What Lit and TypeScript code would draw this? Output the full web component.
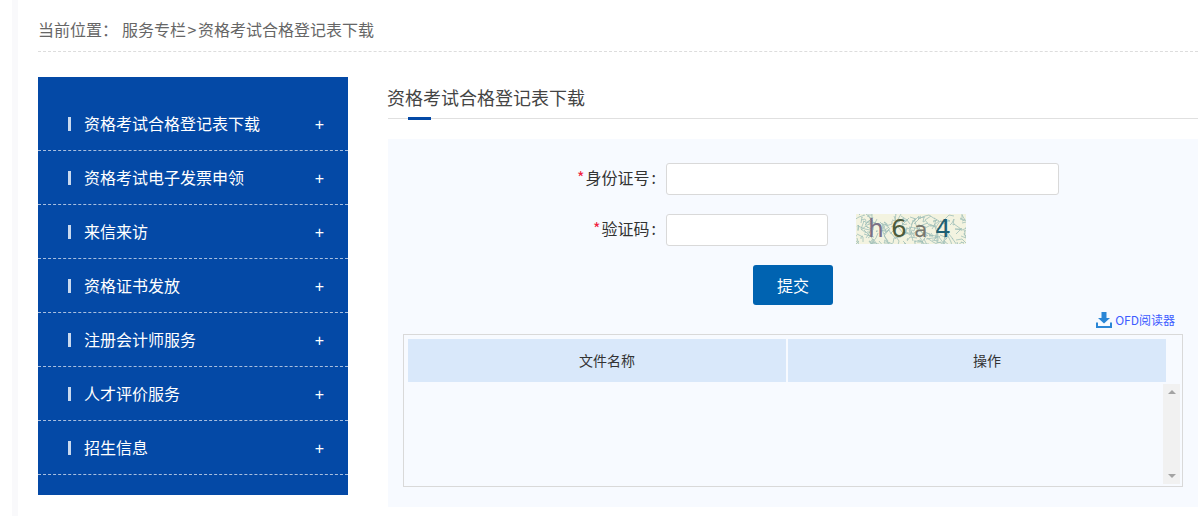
import { LitElement, html, css, svg } from "lit";
import { customElement } from "lit/decorators.js";

const MENU = ["资格考试合格登记表下载", "资格考试电子发票申领", "来信来访", "资格证书发放", "注册会计师服务", "人才评价服务", "招生信息"];

// Deterministic speckle of short strokes for the captcha background
const NOISE: string[] = [];
let seed = 7;
const rnd = (n: number) => {
  seed = (seed * 16807) % 2147483647;
  return seed % n;
};
for (let i = 0; i < 150; i++) {
  const x = rnd(110);
  const y = rnd(30);
  NOISE.push(`M${x} ${y} l${rnd(15) - 7} ${rnd(11) - 2} l${rnd(13) - 6} ${rnd(9) - 2}`);
}

@customElement("app-root")
export class AppRoot extends LitElement {
  static styles = css`
    :host { display: block; height: 516px; overflow: hidden; background: #fff; font-family: "Noto Sans CJK SC", "Liberation Sans", sans-serif; }
    .page { margin-left: 12px; border-left: 6px solid #f9f9fb; height: 516px; padding-left: 20px; box-sizing: border-box; }
    .crumb { width: 1160px; height: 52px; box-sizing: border-box; padding-top: 17px; line-height: 24px; font-size: 16px; color: #666; border-bottom: 1px dashed #ddd; }
    .crumb .here { margin-right: 4px; }
    .crumb .gt { display: inline-block; width: 12px; text-align: center; }
    .body { display: flex; gap: 40px; margin-top: 25px; }
    .side { width: 310px; height: 418px; flex: none; box-sizing: border-box; padding-top: 20px; background: #0449a6; }
    .item { height: 54px; box-sizing: border-box; border-bottom: 1px dashed #a9bfdf; display: flex; align-items: center; padding: 0 24px 0 30px; color: #fff; font-size: 16px; }
    .tick { width: 3px; height: 14px; background: #c9d9ef; margin-right: 13px; flex: none; }
    .label { flex: 1; position: relative; top: -1px; }
    .plus { font-size: 16px; line-height: 16px; margin-top: 2px; font-family: "Liberation Sans", sans-serif; }
    .main { width: 810px; flex: none; }
    .title { height: 42px; box-sizing: border-box; position: relative; border-bottom: 1px solid #e0e0e0; font-size: 18px; line-height: 40px; color: #444; text-indent: -1px; }
    .title::after { content: ""; position: absolute; left: 20px; bottom: -2px; width: 23px; height: 3px; background: #0449a6; }
    .panel { margin-top: 20px; height: 368px; box-sizing: border-box; background: #f7faff; padding: 24px 15px 0; }
    .row { display: flex; align-items: flex-start; }
    .row + .row { margin-top: 19px; }
    .lab { width: 263px; text-align: right; font-size: 16px; line-height: 29px; color: #333; white-space: nowrap; }
    .lab i { color: #f02040; font-style: normal; margin-right: 1px; }
    .colon { margin-left: 2px; margin-right: 10px; }
    input { display: block; box-sizing: border-box; height: 32px; border: 1px solid #d9d9d9; border-radius: 3px; background: #fff; padding: 0 8px; outline: none; }
    .w1 { width: 393px; }
    .w2 { width: 162px; }
    .cap { margin-left: 28px; width: 110px; height: 30px; display: block; }
    .cap text { font-family: "DejaVu Sans", sans-serif; font-size: 25px; }
    .act { display: flex; justify-content: center; margin: 19px 0 0; }
    button { width: 80px; height: 40px; border: 0; border-radius: 3px; background: #0063b1; color: #fff; font: 16px "Noto Sans CJK SC", sans-serif; padding: 0; }
    .ofd { display: flex; justify-content: flex-end; align-items: center; gap: 3px; height: 18px; margin-top: 6px; padding-right: 8px; font-size: 12px; line-height: 16px; color: #3d5cff; }
    .ofd svg { display: block; }
    .tbl { margin-top: 5px; height: 153px; box-sizing: border-box; border: 1px solid #d9d9d9; padding: 4px 16px 0 4px; position: relative; }
    .head { display: grid; grid-template-columns: 1fr 1fr; gap: 2px; }
    .head div { height: 43px; line-height: 43px; padding-left: 20px; box-sizing: border-box; text-align: center; background: #d9e8fa; font-size: 14px; color: #333; }
    .bar { position: absolute; right: 2px; top: 49px; width: 17px; height: 100px; background: #f1f1f1; display: flex; flex-direction: column; justify-content: space-between; align-items: center; padding: 6px 0; box-sizing: border-box; }
    .arr { width: 0; height: 0; border-left: 4px solid transparent; border-right: 4px solid transparent; }
    .up { border-bottom: 4px solid #a3a3a3; }
    .down { border-top: 4px solid #a3a3a3; }
  `;

  render() {
    return html`<div class="page">
      <div class="crumb"><span class="here">当前位置：</span>服务专栏<span class="gt">&gt;</span>资格考试合格登记表下载</div>
      <div class="body">
        <nav class="side">
          ${MENU.map((m) => html`<div class="item"><span class="tick"></span><span class="label">${m}</span><span class="plus">+</span></div>`)}
        </nav>
        <section class="main">
          <div class="title">资格考试合格登记表下载</div>
          <div class="panel">
            <div class="row">
              <div class="lab"><i>*</i>身份证号<span class="colon">:</span></div>
              <input class="w1" type="text" />
            </div>
            <div class="row">
              <div class="lab"><i>*</i>验证码<span class="colon">:</span></div>
              <input class="w2" type="text" />
              <svg class="cap" viewBox="0 0 110 30" aria-label="验证码图片">
                <rect width="110" height="30" fill="#f3f3e0"></rect>
                <g fill="none" stroke="#9fbfb9" stroke-width="0.8">
                  ${NOISE.map((d) => svg`<path d=${d}></path>`)}
                </g>
                <text x="12" y="23" fill="#7b6f86">h</text>
                <text x="35" y="23" fill="#4c5b3c">6</text>
                <text x="58" y="23" fill="#77776f" style="font-size:22px">a</text>
                <text x="79" y="23" fill="#1f5f72">4</text>
              </svg>
            </div>
            <div class="act"><button>提交</button></div>
            <div class="ofd">
              <svg width="16" height="16" viewBox="0 0 16 16"><path fill="#2a86d6" d="M5.5 0h5v6H14L8 11.6 2 6h3.5zM0 10.5h2V14h12v-3.5h2V16H0z"></path></svg>
              <span>OFD阅读器</span>
            </div>
            <div class="tbl">
              <div class="head"><div>文件名称</div><div>操作</div></div>
              <div class="bar"><span class="arr up"></span><span class="arr down"></span></div>
            </div>
          </div>
        </section>
      </div>
    </div>`;
  }
}
